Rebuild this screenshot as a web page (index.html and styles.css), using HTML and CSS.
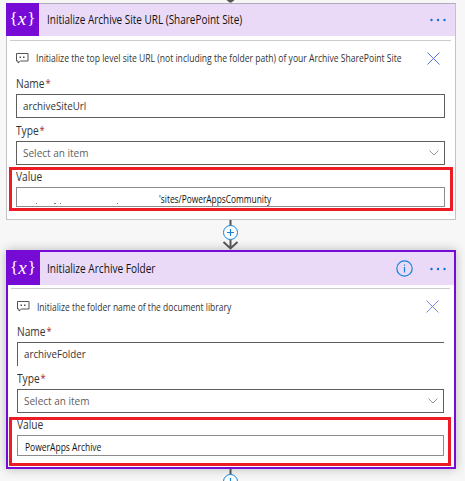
FILE: index.html
```html
<!DOCTYPE html>
<html lang="en">
<head>
<meta charset="utf-8">
<title>Flow designer</title>
<link rel="stylesheet" href="styles.css">
</head>
<body>
<main class="flow">
  <svg class="connector" width="20" height="3" viewBox="0 0 20 3"><path d="M6.500 0h8L11.500 2.500h-2z" fill="#555"/></svg>
  <section class="card">
    <header class="card-header">
      <div class="badge"><span>{</span><em>x</em><span>}</span></div>
      <h2 class="t-title1">Initialize Archive Site URL (SharePoint Site)</h2>
      <svg class="dots" width="18" height="4" viewBox="0 0 18 4" fill="#0874d8"><circle cx="2.500" cy="2" r="1.200"/><circle cx="9" cy="2" r="1.200"/><circle cx="15.500" cy="2" r="1.200"/></svg>
    </header>
    <div class="card-body">
      <div class="note">
        <svg class="comment" width="13" height="11" viewBox="0 0 13 11"><path d="M.5.500h11.500v7.500H4.500L2 10V8H.5z" fill="none" stroke="#555"/><path d="M3.500 3.500h1.500v1.500h-1.500zM7 3.500h1.500v1.500H7z" fill="#555"/></svg>
        <p class="t-note1">Initialize the top level site URL (not including the folder path) of your Archive SharePoint Site</p>
        <svg class="close" width="13" height="13" viewBox="0 0 13 13"><path d="M.5.500l12 12M12.500.500l-12 12" stroke="#5b70ee" fill="none"/></svg>
      </div>
      <label class="label">Name<i>*</i></label>
      <div class="field"><span class="t-url">archiveSiteUrl</span></div>
      <label class="label">Type<i>*</i></label>
      <div class="field"><span class="t-select">Select an item</span><svg class="chevron" width="10" height="6" viewBox="0 0 10 6"><path d="M.5.500L5 5 9.500.500" fill="none" stroke="#999"/></svg></div>
      <label class="label label-value">Value</label>
      <div class="field field-value"><svg class="marks" width="90" height="2" viewBox="0 0 90 2" fill="#777"><path d="M0 1h1v1H0zM18 1h2v1h-2zM24 1h1v1h-1zM81 1h1v1h-1z"/></svg><span class="t-path">'sites/PowerAppsCommunity</span></div>
    </div>
    <div class="highlight"></div>
  </section>
  <svg class="connector" width="20" height="30" viewBox="0 0 20 30"><path d="M10.500 0v28M3.500 22l7 6.500 7-6.500" fill="none" stroke="#555" stroke-width="2"/><circle cx="10.500" cy="12.500" r="7" fill="#fff" stroke="#1683d8"/><path d="M10.500 9v7M7 12.500h7" stroke="#1683d8" stroke-width="1.200"/></svg>
  <section class="card selected">
    <header class="card-header">
      <div class="badge"><span>{</span><em>x</em><span>}</span></div>
      <h2 class="t-title2">Initialize Archive Folder</h2>
      <svg class="info" width="17" height="17" viewBox="0 0 17 17"><circle cx="8.500" cy="8.500" r="7.700" fill="none" stroke="#1683d8" stroke-width="1.200"/><path d="M8.500 7v5.500M8.500 4.500v1.300" stroke="#1683d8" stroke-width="1.200"/></svg>
      <svg class="dots" width="18" height="4" viewBox="0 0 18 4" fill="#0874d8"><circle cx="2.500" cy="2" r="1.200"/><circle cx="9" cy="2" r="1.200"/><circle cx="15.500" cy="2" r="1.200"/></svg>
    </header>
    <div class="card-body">
      <div class="note">
        <svg class="comment" width="13" height="11" viewBox="0 0 13 11"><path d="M.5.500h11.500v7.500H4.500L2 10V8H.5z" fill="none" stroke="#555"/><path d="M3.500 3.500h1.500v1.500h-1.500zM7 3.500h1.500v1.500H7z" fill="#555"/></svg>
        <p class="t-note2">Initialize the folder name of the document library</p>
        <svg class="close" width="13" height="13" viewBox="0 0 13 13"><path d="M.5.500l12 12M12.500.500l-12 12" stroke="#7588f0" fill="none"/></svg>
      </div>
      <label class="label">Name<i>*</i></label>
      <div class="field open"><span class="t-folder">archiveFolder</span></div>
      <label class="label">Type<i>*</i></label>
      <div class="field"><span class="t-select">Select an item</span><svg class="chevron" width="10" height="6" viewBox="0 0 10 6"><path d="M.5.500L5 5 9.500.500" fill="none" stroke="#999"/></svg></div>
      <label class="label label-value">Value</label>
      <div class="field field-value"><span class="t-archive">PowerApps Archive</span></div>
    </div>
    <div class="highlight"></div>
  </section>
  <svg class="connector" width="20" height="12" viewBox="0 0 20 12"><path d="M10.500 0v6" stroke="#555" stroke-width="2"/><circle cx="10.500" cy="12.500" r="7" fill="#fff" stroke="#1683d8"/><path d="M10.500 9v7M7 12.500h7" stroke="#1683d8" stroke-width="1.200"/></svg>
</main>
</body>
</html>
```
FILE: styles.css
```css
* { box-sizing: border-box; }
body { margin: 0; background: #f7f7f7; font-family: "Open Sans", sans-serif; font-size: 11px; color: #333; }
.flow { width: 465px; height: 481px; overflow: hidden; display: flex; flex-direction: column; align-items: flex-start; padding-left: 6px; }
svg { display: block; flex: none; }
.connector { margin-left: 214px; flex: none; position: relative; z-index: 1; }
h2, p { margin: 0; font-weight: 400; white-space: nowrap; min-width: 0; }
span { white-space: nowrap; }
/* condensed text */
h2, p, .label, .field span { transform: scaleX(.85); transform-origin: left center; }
.card { position: relative; flex: none; width: 450px; height: 217px; background: #fff; border: 1px solid #c3c3c3; border-top-color: #b3a9bd; }
.card-header { display: flex; align-items: center; height: 32px; background: #ebdaf7; padding-right: 8px; }
.badge { flex: none; display: flex; align-items: center; justify-content: center; width: 33px; height: 33px; margin: -1px 8px 0 -1px; padding-bottom: 2px; background: #770bd6; color: #fff; font: 17px/20px "Liberation Serif", serif; }
.badge em { font-size: 19px; line-height: 18px; margin: 0 1px 0 0; }
.card-header h2 { flex: 1; font-size: 12px; color: #111; line-height: 18px; }
.card-header .t-title1 { transform: scaleX(.83); }
.card-header .t-title2 { transform: scaleX(.84); }
.info { margin-right: 16px; }
.card-body { margin: 4px 4px 0 3px; border-top: 1px solid #ccc; padding: 0 6px 0 6px; }
.note { height: 34px; display: flex; align-items: center; font-size: 10px; }
.note p { flex: 1; margin-left: 7px; line-height: 14px; }
.note .t-note1 { transform: scaleX(.857); }
.close { margin-right: 5px; }
.label { display: flex; align-items: center; height: 18px; line-height: 18px; font-size: 12px; margin-top: -1px; margin-bottom: 1px; }
.note + .label { margin: 0 0 1px; }
.label i { font-style: normal; color: #a4262c; margin: -2px 0 0 1px; font-size: 11px; }
.field { height: 24px; margin-bottom: 5px; border: 1px solid #605e5c; display: flex; align-items: center; justify-content: space-between; padding: 0 5px 0 6px; font-size: 11.500px; background: #fff; line-height: 16px; }
.label-value { height: 17px; margin-top: -2px; margin-bottom: 2px; }
.field-value { height: 20px; border-color: #8c8c8c; font-size: 10px; margin: 0; color: #111; justify-content: flex-start; }
.field .t-select { color: #605e5c; transform: scaleX(.87); }
.marks { align-self: flex-end; margin: 0 0 2px 13px; }
.field .t-path { margin-left: 33px; padding-top: 4px; transform: scaleX(.836); }
.highlight { position: absolute; left: 2px; top: 163px; width: 444px; height: 44px; border: 3px solid #ed1c24; }
.selected { height: 219px; border: 2px solid #770bd6; box-shadow: 0 0 10px rgba(0,0,0,.25); }
.selected .card-header { height: 33px; padding-right: 7px; }
.selected .badge { width: 34px; height: 35px; margin: -2px 7px 0 -2px; padding-bottom: 0; }
.selected .card-body { margin-top: 3px; margin-left: 3px; }
.selected .note { height: 35px; }
.selected .note + .label { margin: -1px 0 1px; }
.selected .open { border-right: 0; border-bottom: 0; padding-bottom: 1px; }
.selected .field-value { height: 21px; padding-top: 2px; }
.selected .highlight { left: 1px; top: 165px; width: 442px; height: 49px; }
.t-archive { margin-left: 1px; }
```
